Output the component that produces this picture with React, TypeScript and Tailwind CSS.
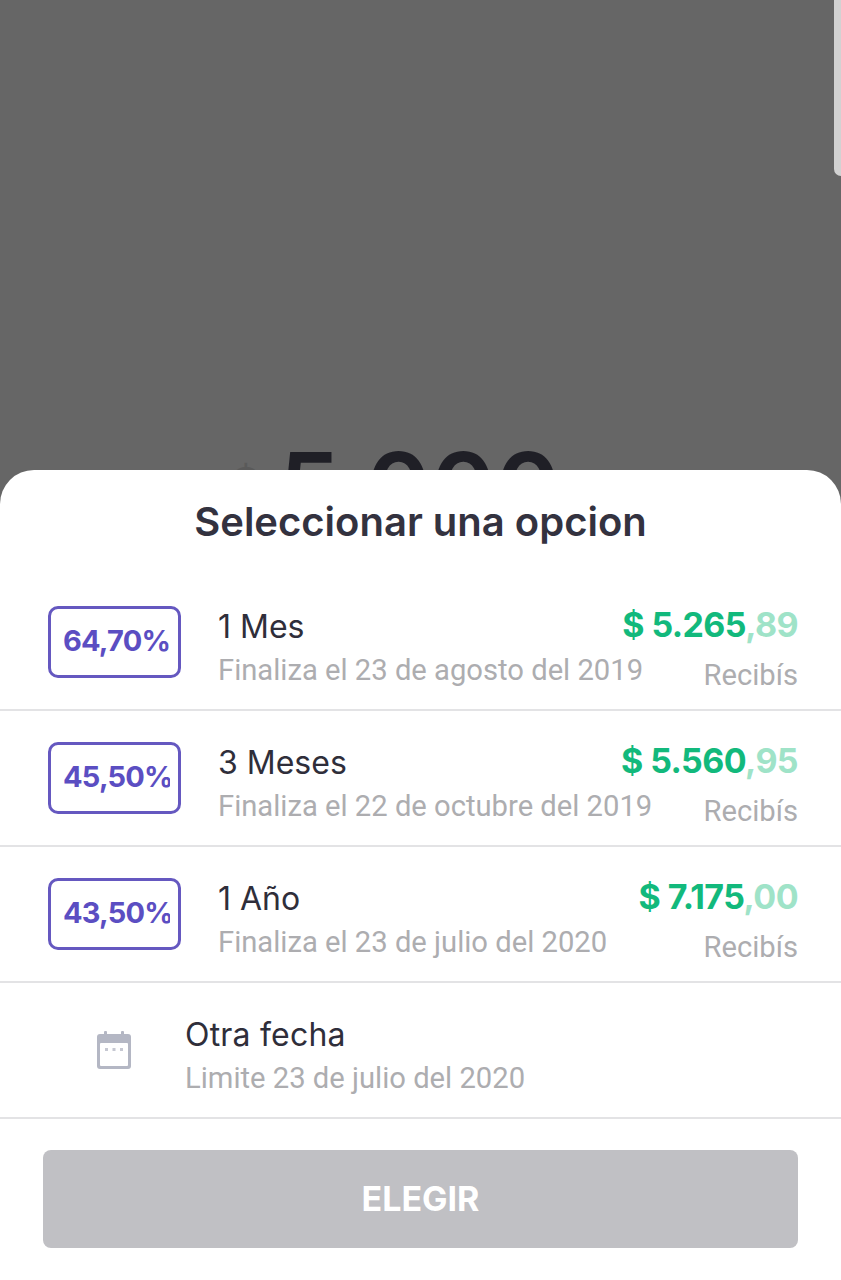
// Hoja inferior para elegir plazo, sobre la pantalla oscurecida.

type Option = {
  rate: string;
  term: string;
  ends: string;
  whole: string;
  cents: string;
};

const options: Option[] = [
  { rate: "64,70%", term: "1 Mes", ends: "Finaliza el 23 de agosto del 2019", whole: "$ 5.265", cents: ",89" },
  { rate: "45,50%", term: "3 Meses", ends: "Finaliza el 22 de octubre del 2019", whole: "$ 5.560", cents: ",95" },
  { rate: "43,50%", term: "1 Año", ends: "Finaliza el 23 de julio del 2020", whole: "$ 7.175", cents: ",00" },
];

function CalendarGlyph() {
  return (
    <svg viewBox="0 0 34 38" className="h-[38px] w-[34px]" aria-hidden="true">
      <rect x="7" y="0" width="3" height="6" rx="1" fill="#b4b7c4" />
      <rect x="24" y="0" width="3" height="6" rx="1" fill="#b4b7c4" />
      <rect x="0" y="3" width="34" height="35" rx="3" fill="#b4b7c4" />
      <rect x="3" y="12" width="28" height="23" rx="1" fill="#ffffff" />
      <rect x="8" y="17" width="3" height="3" fill="#c6c8d2" />
      <rect x="15.5" y="17" width="3" height="3" fill="#c6c8d2" />
      <rect x="23" y="17" width="3" height="3" fill="#c6c8d2" />
    </svg>
  );
}

function OptionRow({ option }: { option: Option }) {
  return (
    <li className="flex h-[136px] items-center border-b-2 border-[#e3e3e5] pl-12 pr-[43px]">
      <div className="flex h-[72px] w-[133px] shrink-0 items-center overflow-hidden rounded-[10px] border-[3px] border-[#6558c0] pb-[2px] pl-[12px] pr-2">
        <span className="overflow-hidden whitespace-nowrap font-['Inter',sans-serif] text-[29px] font-bold tracking-[-0.8px] text-[#5b4ec2]">
          {option.rate}
        </span>
      </div>
      <div className="ml-[37px] flex min-w-0 flex-1 flex-col pt-[11px]">
        <span className="font-['Inter',sans-serif] text-[32px] leading-[40px] text-[#2f2e3a]">{option.term}</span>
        <span className="mt-[5px] whitespace-nowrap font-['Roboto',sans-serif] text-[29.2px] leading-[36px] text-[#adadb0]">
          {option.ends}
        </span>
      </div>
      <div className="flex shrink-0 flex-col items-end pt-[14px]">
        <span className="whitespace-nowrap font-['Inter',sans-serif] text-[34px] font-bold leading-[40px] tracking-[-0.6px] text-[#12b97c]">
          {option.whole}
          <span className="text-[#9fe3c8]">{option.cents}</span>
        </span>
        <span className="mt-[12px] font-['Roboto',sans-serif] text-[29.2px] leading-[36px] text-[#adadb0]">Recibís</span>
      </div>
    </li>
  );
}

export default function App() {
  return (
    <div className="relative flex h-[1280px] w-[841px] flex-col overflow-hidden bg-[#666666]">
      <div className="absolute right-0 top-0 h-[176px] w-[7px] rounded-bl-[7px] bg-[#d2d2d2]" />

      <div className="flex h-[470px] shrink-0 items-start justify-center overflow-hidden pr-[50px] pt-[438px]">
        <span className="flex items-start font-['Inter',sans-serif] text-[98px] font-semibold leading-[100px] text-[#1f1f26]">
          <span className="mr-[18px] mt-[16px] text-[46px] leading-[60px] text-[#5a5a5a]">$</span>5.000
        </span>
      </div>

      <section className="flex flex-1 flex-col rounded-t-[34px] bg-white">
        <h1 className="mt-[28px] text-center font-['Inter',sans-serif] text-[40px] font-semibold leading-[48px] text-[#33323f]">
          Seleccionar una opcion
        </h1>

        <ul className="mt-[29px] flex flex-col">
          {options.map((option) => (
            <OptionRow key={option.term} option={option} />
          ))}
          <li className="flex h-[136px] items-center border-b-2 border-[#e3e3e5]">
            <div className="ml-[97px]">
              <CalendarGlyph />
            </div>
            <div className="ml-[54px] flex flex-col pt-[10px]">
              <span className="font-['Inter',sans-serif] text-[32px] leading-[40px] tracking-[0.2px] text-[#2f2e3a]">
                Otra fecha
              </span>
              <span className="mt-[5px] font-['Roboto',sans-serif] text-[29.2px] leading-[36px] text-[#adadb0]">
                Limite 23 de julio del 2020
              </span>
            </div>
          </li>
        </ul>

        <div className="px-[43px] pt-[31px]">
          <button className="h-[98px] w-full rounded-lg bg-[#c0c0c4] pb-[2px] font-['Inter',sans-serif] text-[34px] font-bold text-white">
            ELEGIR
          </button>
        </div>
      </section>
    </div>
  );
}
